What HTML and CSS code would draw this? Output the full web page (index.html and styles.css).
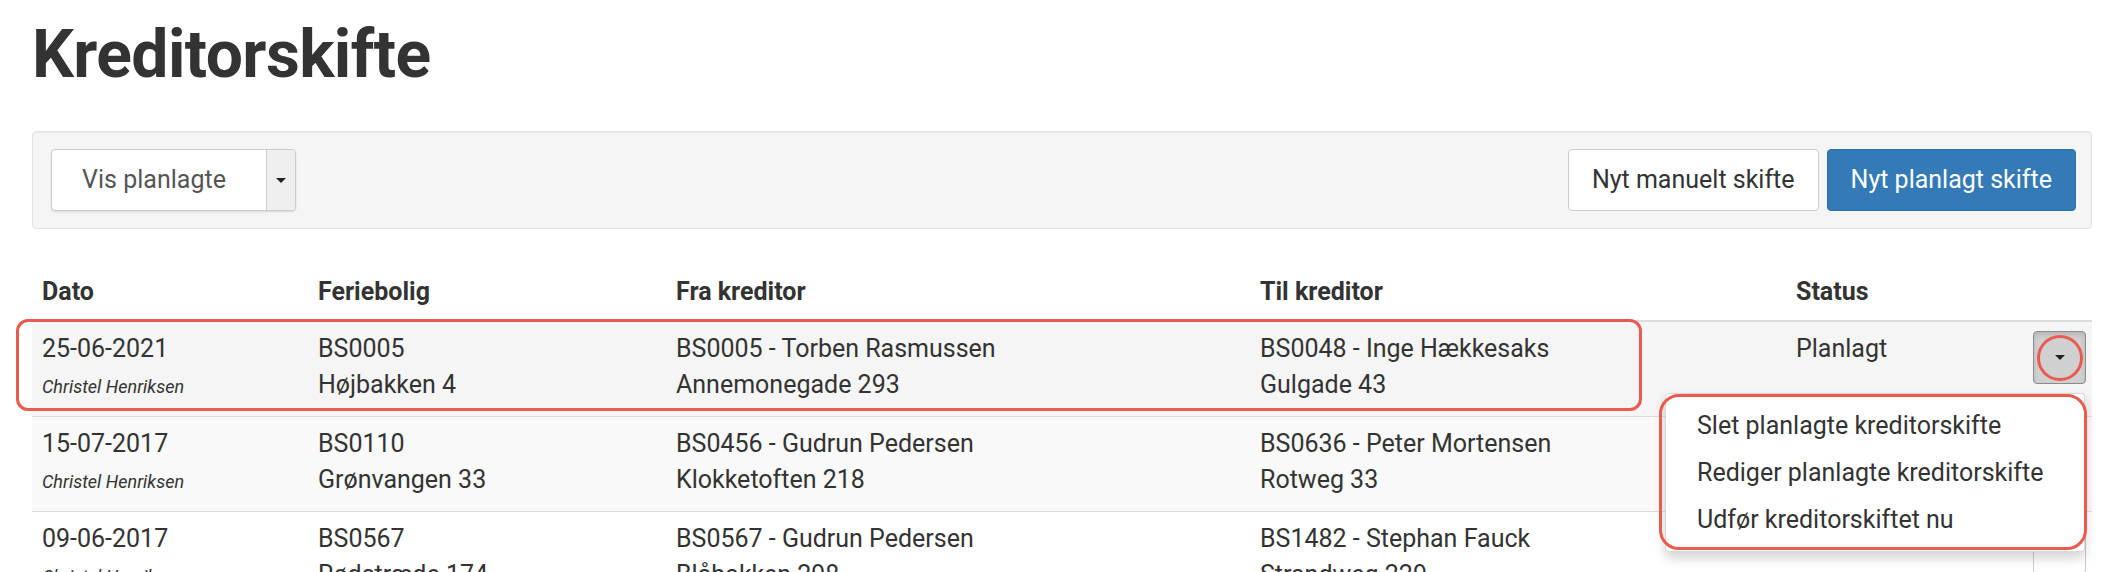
FILE: index.html
```html
<!DOCTYPE html>
<html lang="da">
<head>
    <meta charset="UTF-8">
    <meta name="viewport" content="width=device-width, initial-scale=1.0">
    <title>Kreditorskifte</title>
    <link rel="stylesheet" href="styles.css">
</head>
<body>
    <div class="page">
        <h1 class="page-title">Kreditorskifte</h1>

        <div class="toolbar">
            <div class="select-group">
                <span class="select-label">Vis planlagte</span>
                <span class="select-caret"><span class="caret"></span></span>
            </div>
            <div class="toolbar-actions">
                <button class="btn btn-default">Nyt manuelt skifte</button>
                <button class="btn btn-primary">Nyt planlagt skifte</button>
            </div>
        </div>

        <div class="table-wrap">
            <table class="table">
                <colgroup>
                    <col class="col-date">
                    <col class="col-house">
                    <col class="col-from">
                    <col class="col-to">
                    <col class="col-status">
                    <col class="col-action">
                </colgroup>
                <thead>
                    <tr>
                        <th>Dato</th>
                        <th>Feriebolig</th>
                        <th>Fra kreditor</th>
                        <th>Til kreditor</th>
                        <th>Status</th>
                        <th></th>
                    </tr>
                </thead>
                <tbody>
                    <tr class="row-hover">
                        <td>25-06-2021<br><em class="by">Christel Henriksen</em></td>
                        <td>BS0005<br>Højbakken 4</td>
                        <td>BS0005 - Torben Rasmussen<br>Annemonegade 293</td>
                        <td>BS0048 - Inge Hækkesaks<br>Gulgade 43</td>
                        <td>Planlagt</td>
                        <td class="actions">
                            <div class="dropdown">
                                <button class="btn-toggle active"><span class="caret"></span></button>
                                <span class="mark-circle"></span>
                                <ul class="dropdown-menu">
                                    <li>Slet planlagte kreditorskifte</li>
                                    <li>Rediger planlagte kreditorskifte</li>
                                    <li>Udfør kreditorskiftet nu</li>
                                </ul>
                                <span class="mark-menu"></span>
                            </div>
                        </td>
                    </tr>
                    <tr class="row-striped">
                        <td>15-07-2017<br><em class="by">Christel Henriksen</em></td>
                        <td>BS0110<br>Grønvangen 33</td>
                        <td>BS0456 - Gudrun Pedersen<br>Klokketoften 218</td>
                        <td>BS0636 - Peter Mortensen<br>Rotweg 33</td>
                        <td>Planlagt</td>
                        <td class="actions"><button class="btn-toggle"><span class="caret"></span></button></td>
                    </tr>
                    <tr>
                        <td>09-06-2017<br><em class="by">Christel Henriksen</em></td>
                        <td>BS0567<br>Rødstræde 174</td>
                        <td>BS0567 - Gudrun Pedersen<br>Blåbakken 298</td>
                        <td>BS1482 - Stephan Fauck<br>Strandweg 229</td>
                        <td>Planlagt</td>
                        <td class="actions"><button class="btn-toggle"><span class="caret"></span></button></td>
                    </tr>
                </tbody>
            </table>
            <span class="mark-row"></span>
        </div>
    </div>
</body>
</html>
```

FILE: styles.css
```css
:root {
    --text: #333;
    --muted: #555;
    --border: #ddd;
    --primary: #337ab7;
    --mark: #eb5a50;
}
body {
    margin: 0; background: #fff; color: var(--text);
    font-family: Roboto, "Liberation Sans", sans-serif; font-size: 25px; line-height: 36px;
}
.page { width: 2060px; margin-left: 32px; }
.page-title { font-size: 66px; font-weight: 700; line-height: 76px; letter-spacing: -0.6px; margin: 17px 0 38px; }

/* toolbar */
.toolbar {
    display: flex; justify-content: space-between; align-items: center;
    background: #f5f5f5; border: 1px solid #e3e3e3; border-radius: 4px;
    padding: 17px 15px 17px 18px; box-shadow: inset 0 1px 1px rgba(0,0,0,0.05);
}
.select-group {
    display: flex; height: 62px; box-sizing: border-box; border: 1px solid #ccc; border-radius: 4px;
    background: #fff; box-shadow: 0 1px 2px rgba(0,0,0,0.12); overflow: hidden;
}
.select-label { width: 214px; padding-right: 10px; box-sizing: border-box; display: flex; align-items: center; justify-content: center; color: var(--muted); }
.select-caret {
    width: 28px; display: flex; align-items: center; justify-content: center;
    background: #efefef; border-left: 1px solid #ccc;
}
.caret { width: 0; height: 0; border-top: 5px solid #222; border-left: 5px solid transparent; border-right: 5px solid transparent; }
.toolbar-actions { display: flex; gap: 8px; }
.btn {
    font: inherit; padding: 12px 23px; border: 1px solid #ccc; border-radius: 4px;
    background: #fff; color: var(--text); cursor: pointer;
}
.btn-primary { background: var(--primary); border-color: #2e6da4; color: #fff; }

/* table */
.table-wrap { position: relative; margin-top: 35px; }
.table { width: 100%; border-collapse: collapse; table-layout: fixed; }
.col-date { width: 276px; }
.col-house { width: 358px; }
.col-from { width: 584px; }
.col-to { width: 536px; }
.col-status { width: 237px; }
.col-action { width: 69px; }
.table th { text-align: left; font-weight: 700; padding: 10px 10px; border-bottom: 2px solid var(--border); }
.table td { padding: 9px 10px 11px; border-top: 1px solid var(--border); vertical-align: top; white-space: nowrap; }
.table tbody tr:first-child td { border-top: none; }
.row-hover { background: #f5f5f5; }
.row-striped { background: #f9f9f9; }
.by { font-size: 18px; }
.table td.actions { padding: 9px 6px 0 10px; }

.dropdown { position: relative; }
.btn-toggle {
    width: 53px; height: 53px; display: flex; align-items: center; justify-content: center;
    background: #fff; border: 1px solid #ccc; border-radius: 4px; padding: 0 0 0 1px; cursor: pointer;
}
.btn-toggle.active { background: #d0d0d0; border-color: #8c8c8c; box-shadow: inset 0 3px 5px rgba(0,0,0,0.125); }
.dropdown-menu {
    position: absolute; top: 62px; right: 1px; z-index: 2; width: 420px; box-sizing: border-box;
    margin: 0; padding: 9px 0 7px; list-style: none; background: #fff;
    border: 1px solid rgba(0,0,0,0.15); border-radius: 4px; box-shadow: 0 6px 12px rgba(0,0,0,0.175);
}
.dropdown-menu li { padding: 5px 31px 6px; line-height: 36px; color: var(--text); }

/* red annotation marks */
.mark-row, .mark-menu, .mark-circle { position: absolute; border: 3px solid var(--mark); pointer-events: none; z-index: 3; }
.mark-row { left: -16px; top: 55px; width: 1620px; height: 86px; border-radius: 12px; }
.mark-menu { top: 63px; right: -1px; width: 422px; height: 150px; border-radius: 20px; }
.mark-circle { top: 4px; left: 4px; width: 40px; height: 40px; border-radius: 50%; }
```
